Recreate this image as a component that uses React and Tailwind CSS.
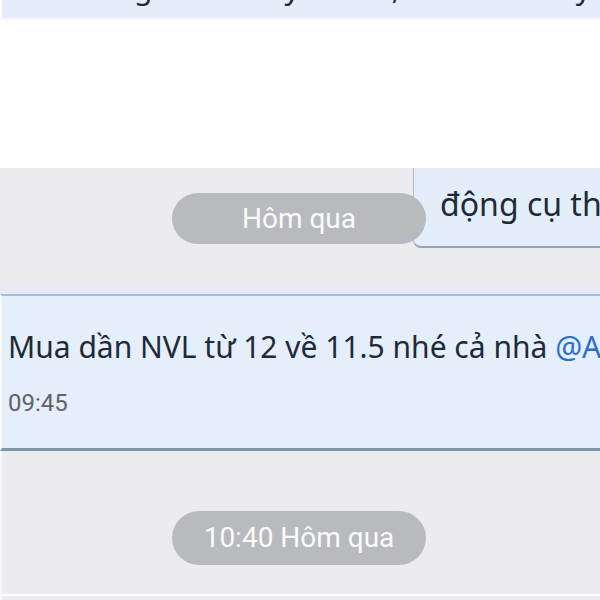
export default function App() {
  return (
    <div className="w-[600px] h-[600px] overflow-hidden bg-[#ececee] flex flex-col" style={{ fontFamily: '"Noto Sans", "Open Sans", sans-serif' }}>
      {/* top cut-off message */}
      <div className="h-[18px] bg-[#e5edfb] border-l-2 border-white overflow-hidden relative shrink-0">
        <div className="flex text-[30px] leading-[30px] text-[#1f2a37] mt-[-27px] whitespace-nowrap">
          <span className="ml-[132px]">g</span>
          <span className="ml-[132px]">y</span>
          <span className="ml-[92px]">,</span>
          <span className="ml-[176px]">y</span>
        </div>
      </div>
      <div className="h-[150px] bg-white border-t-2 border-[#f6f8fc] shrink-0" />
      {/* pill + right bubble */}
      <div className="flex items-start shrink-0 h-[80px]">
        <div className="ml-[172px] mt-[25px] w-[254px] h-[51px] rounded-full bg-[#b9babd] text-[#fbfbfb] text-[28px] flex items-center justify-center relative z-10" style={{ fontFamily: 'Roboto, sans-serif' }}>
          Hôm qua
        </div>
        <div className="ml-[-13px] flex-1 h-[80px] bg-[#e4eefb] border-l border-[#a9bdd3] border-b-2 border-b-[#90a4b8] rounded-bl-lg pl-[26px] pt-[12px] text-[32px] text-[#1f2a37] whitespace-nowrap overflow-hidden">
          động cụ th
        </div>
      </div>
      <div className="h-[37px] shrink-0" />
      <div className="h-[9px] bg-[#e8ebf3] shrink-0" />
      {/* full-width bubble */}
      <div className="shrink-0 h-[157px] bg-[#e5eefb] border-t-2 border-t-[#a8bed8] border-b-[3px] border-b-[#7c99a8] border-l-2 border-l-[#f7f9fd] pl-[6px] pt-[29px] overflow-hidden">
        <div className="text-[30px] leading-[44px] text-[#1f2a37] whitespace-nowrap">
          Mua dần NVL từ 12 về 11.5 nhé cả nhà <span className="text-[#2a6fd0]">@Anh</span>
        </div>
        <div className="mt-[20px] text-[24px] leading-[28px] text-[#5f6368]" style={{ fontFamily: 'Roboto, sans-serif' }}>09:45</div>
      </div>
      {/* second pill */}
      <div className="flex-1 flex flex-col border-l-2 border-[#f7f7f9]">
        <div className="ml-[170px] mt-[60px] w-[254px] h-[54px] rounded-full bg-[#b9babd] text-[#fbfbfb] text-[28px] flex items-center justify-center" style={{ fontFamily: 'Roboto, sans-serif' }}>
          10:40 Hôm qua
        </div>
        <div className="mt-auto mb-[4px] h-[2px] bg-white" />
      </div>
    </div>
  );
}
